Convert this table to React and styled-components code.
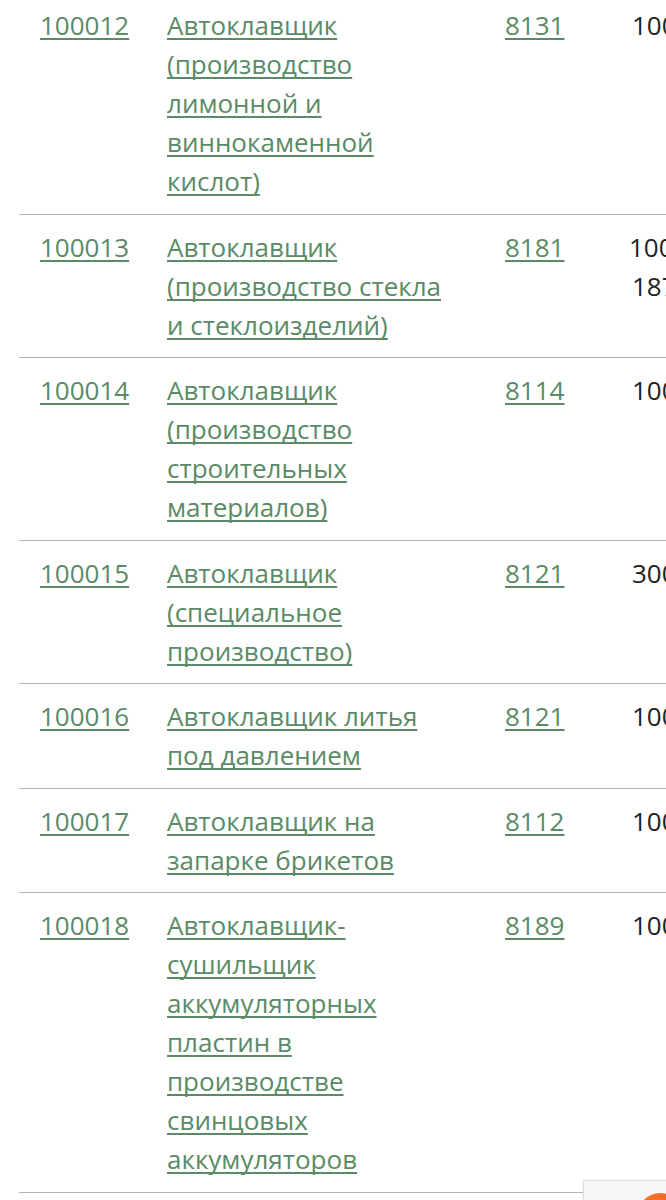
import React from 'react'
import styled, {createGlobalStyle} from 'styled-components'

const colors = {
	link: '#5a8a66',
	text: '#222222',
	rule: '#b4b4b4',
}

const GlobalStyle = createGlobalStyle`
	html, body {
		margin: 0;
		padding: 0;
		background: #ffffff;
		overflow: hidden;
	}
	body {
		font-family: "Open Sans", "Liberation Sans", sans-serif;
		font-size: 26px;
		line-height: 39px;
		color: ${colors.text};
	}
`

const Page = styled.div`
	width: 666px;
	height: 1200px;
	overflow: hidden;
	position: relative;
`

const Table = styled.div`
	margin: -7px 0 0 19px;
	width: 720px;
`

const Row = styled.div`
	display: grid;
	grid-template-columns: 127px 338px 127px 1fr;
	border-bottom: 1px solid ${colors.rule};
	padding: 13px 0 12.5px;
`

const Cell = styled.div`
	padding: 0 0 0 21px;
	padding-right: ${p => p.$gap || 20}px;
`

const Link = styled.a`
	color: ${colors.link};
	text-decoration: underline;
	text-decoration-thickness: 2px;
	text-underline-offset: 3px;
	text-decoration-skip-ink: none;
`

const Value = styled.span`
	display: block;
	white-space: nowrap;
	text-indent: ${p => p.$indent || 0}px;
`

const Widget = styled.div`
	position: absolute;
	left: 583px;
	top: 1180px;
	width: 120px;
	height: 60px;
	background: #f6f6f6;
	border: 1px solid #dedede;
	border-radius: 2px;
	box-shadow: 0 0 3px rgba(0, 0, 0, 0.08);
`

const Bubble = styled.div`
	position: absolute;
	left: 54px;
	top: 12px;
	width: 44px;
	height: 44px;
	border-radius: 50%;
	background: radial-gradient(circle at 30% 30%, #f47a2c, #e4541a);
`

const rows = [
	{code: '100012', name: 'Автоклавщик (производство лимонной и виннокаменной кислот)', okz: '8131', values: ['10003']},
	{code: '100013', name: 'Автоклавщик (производство стекла и стеклоизделий)', okz: '8181', values: ['10003', '18755'], indent: -3},
	{code: '100014', name: 'Автоклавщик (производство строительных материалов)', okz: '8114', values: ['10003']},
	{code: '100015', name: 'Автоклавщик (специальное производство)', okz: '8121', values: ['30003']},
	{code: '100016', name: 'Автоклавщик литья под давлением', okz: '8121', values: ['10003']},
	{code: '100017', name: 'Автоклавщик на запарке брикетов', okz: '8112', values: ['10003']},
	{code: '100018', name: 'Автоклавщик-сушильщик аккумуляторных пластин в производстве свинцовых аккумуляторов', okz: '8189', values: ['10003']},
]

const App = () => (
	<Page>
		<GlobalStyle/>
		<Table>
			{rows.map(row => (
				<Row key={row.code}>
					<Cell><Link href='#'>{row.code}</Link></Cell>
					<Cell $gap={28}><Link href='#'>{row.name}</Link></Cell>
					<Cell><Link href='#'>{row.okz}</Link></Cell>
					<Cell>
						{row.values.map((v, i) => (
							<Value key={v} $indent={i === 0 ? row.indent : 0}>{v}</Value>
						))}
					</Cell>
				</Row>
			))}
		</Table>
		<Widget><Bubble/></Widget>
	</Page>
)

export default App
